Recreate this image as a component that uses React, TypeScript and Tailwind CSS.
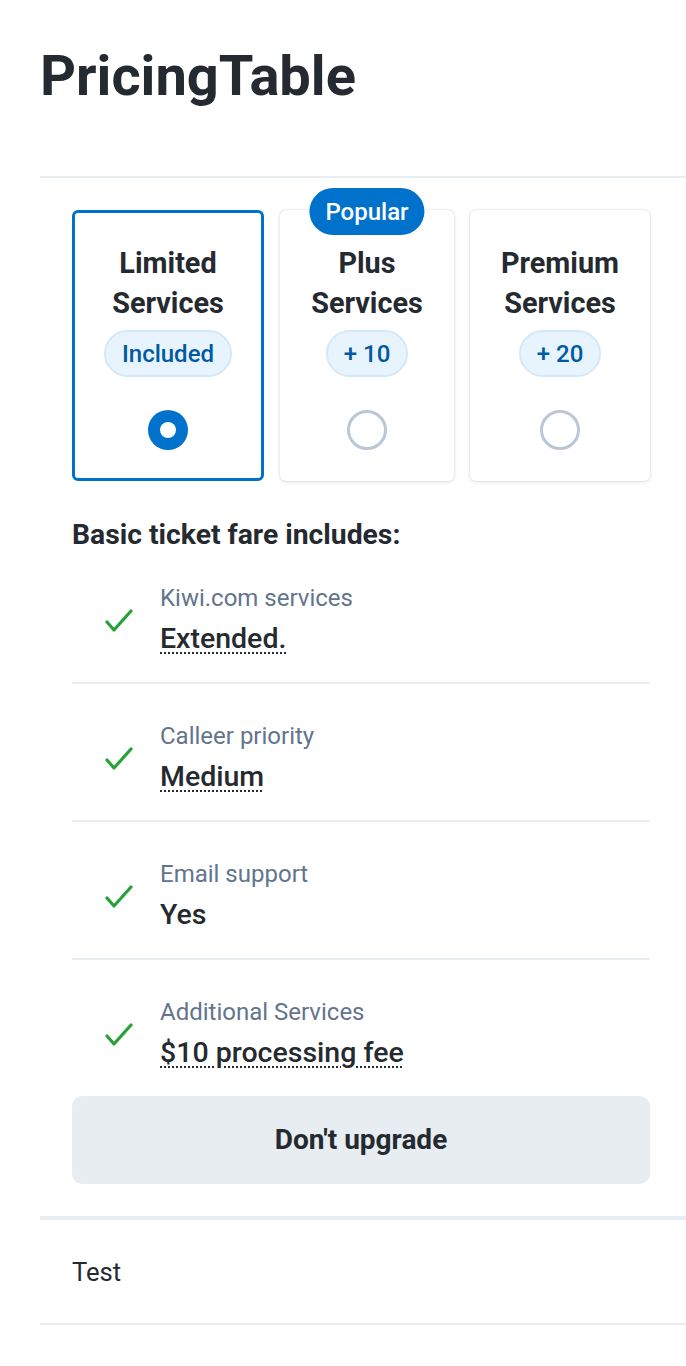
const plans = [
  { id: "limited", title: "Limited Services", badge: "Included", width: "w-[192px]", selected: true, popular: false },
  { id: "plus", title: "Plus Services", badge: "+ 10", width: "w-[174px]", selected: false, popular: true },
  { id: "premium", title: "Premium Services", badge: "+ 20", width: "w-[180px]", selected: false, popular: false },
];

const features = [
  { label: "Kiwi.com services", value: "Extended.", tooltip: true },
  { label: "Calleer priority", value: "Medium", tooltip: true },
  { label: "Email support", value: "Yes", tooltip: false },
  { label: "Additional Services", value: "$10 processing fee", tooltip: true },
];

function Check() {
  return (
    <svg width="28" height="24" viewBox="0 0 28 24" className="shrink-0">
      <polyline
        points="2,13 9,21 26,2"
        fill="none"
        stroke="#28a138"
        strokeWidth="3.2"
        strokeLinecap="round"
        strokeLinejoin="round"
      />
    </svg>
  );
}

function Radio({ checked }: { checked: boolean }) {
  if (checked) {
    return (
      <div className="flex h-10 w-10 items-center justify-center rounded-full bg-[#0172cb]">
        <div className="h-4 w-4 rounded-full bg-white" />
      </div>
    );
  }
  return <div className="h-10 w-10 rounded-full border-[3px] border-[#bac7d5] bg-white" />;
}

export default function App() {
  return (
    <div className="min-h-screen bg-white pl-10 pt-12 font-['Roboto',sans-serif] text-[#252a31]">
      <h1 className="text-[56px] font-bold leading-none">PricingTable</h1>

      <div className="mt-[72px] border-y-2 border-[#e8edf1] pb-8 pl-8 pr-9 pt-8">
        <div className="flex gap-4">
          {plans.map((plan) => (
            <div
              key={plan.id}
              className={`relative flex h-[271px] ${plan.width} flex-col items-center rounded-md border-[3px] bg-white px-5 pb-7 pt-[30px] text-center ${
                plan.selected
                  ? "border-[#0172cb]"
                  : "border-transparent shadow-[0_0_2px_rgba(37,42,49,0.16),0_1px_4px_rgba(37,42,49,0.12)]"
              }`}
            >
              {plan.popular && (
                <span className="absolute -top-[25px] left-1/2 flex h-[47px] -translate-x-1/2 items-center rounded-full bg-[#0172cb] px-4 text-[24px] font-medium text-white">
                  Popular
                </span>
              )}
              <h3 className="text-[28.8px] font-bold leading-10">{plan.title}</h3>
              <span className="mt-[7px] flex h-[47px] items-center rounded-full border-2 border-[#d3e8f9] bg-[#e8f4fd] px-4 text-[24px] font-medium text-[#005aa3]">
                {plan.badge}
              </span>
              <div className="mt-[33px]">
                <Radio checked={plan.selected} />
              </div>
            </div>
          ))}
        </div>

        <h4 className="mt-[38px] text-[28.3px] font-bold leading-8">Basic ticket fare includes:</h4>

        <ul>
          {features.map((f, i) => (
            <li
              key={f.label}
              className={`flex items-center gap-[27px] pb-[23px] pl-[33px] ${i === 0 ? "pt-[31px]" : "pt-9"} ${
                i < features.length - 1 ? "border-b-2 border-[#e8edf1]" : ""
              }`}
            >
              <Check />
              <div>
                <p className="text-[24px] leading-8 text-[#62758d]">{f.label}</p>
                <p
                  className={`mt-[5px] text-[28.5px] font-medium leading-10 ${
                    f.tooltip ? "underline decoration-dotted decoration-2 underline-offset-4" : ""
                  }`}
                >
                  {f.value}
                </p>
              </div>
            </li>
          ))}
        </ul>

        <button className="flex h-[88px] w-full items-center justify-center rounded-[10px] bg-[#e8edf1] text-[28px] font-bold">
          Don't upgrade
        </button>
      </div>

      <div className="border-y-2 border-[#e8edf1] pb-[33px] pl-8 pt-[34px] text-[25.6px] leading-9">Test</div>
    </div>
  );
}
